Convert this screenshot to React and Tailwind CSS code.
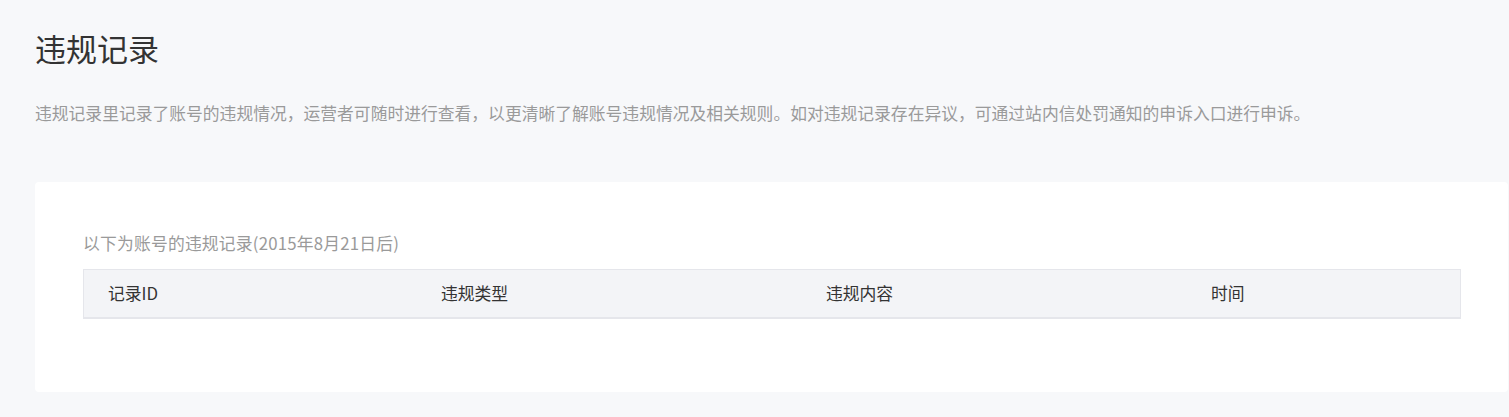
export default function App() {
  const font = { fontFamily: '"Microsoft YaHei", "Noto Sans CJK SC", "Noto Sans", sans-serif' };
  return (
    <div className="min-h-[417px] w-full bg-[#f7f8fa] pl-[35px] pr-[1px] pt-[27px]" style={font}>
      <h1 className="text-[31px] leading-[41px] text-[#333333] font-normal">违规记录</h1>
      <p className="mt-[33px] text-[16.8px] leading-[24px] text-[#9a9a9a]">
        违规记录里记录了账号的违规情况，运营者可随时进行查看，以更清晰了解账号违规情况及相关规则。如对违规记录存在异议，可通过站内信处罚通知的申诉入口进行申诉。
      </p>
      <div className="mt-[57px] rounded-[4px] bg-white pl-[48px] pr-[47px] pt-[49px] pb-[73px]">
        <div className="text-[16.8px] leading-[24px] text-[#9a9a9a] tracking-[0.2px]">以下为账号的违规记录(2015年8月21日后)</div>
        <div className="mt-[14px] grid grid-cols-[357px_385px_385px_1fr] h-[50px] items-center border border-[#e5e6eb] border-b-2 bg-[#f3f4f7] text-[16.8px] text-[#333333]">
          <div className="pl-[24px]">记录ID</div>
          <div>违规类型</div>
          <div>违规内容</div>
          <div>时间</div>
        </div>
      </div>
    </div>
  );
}
